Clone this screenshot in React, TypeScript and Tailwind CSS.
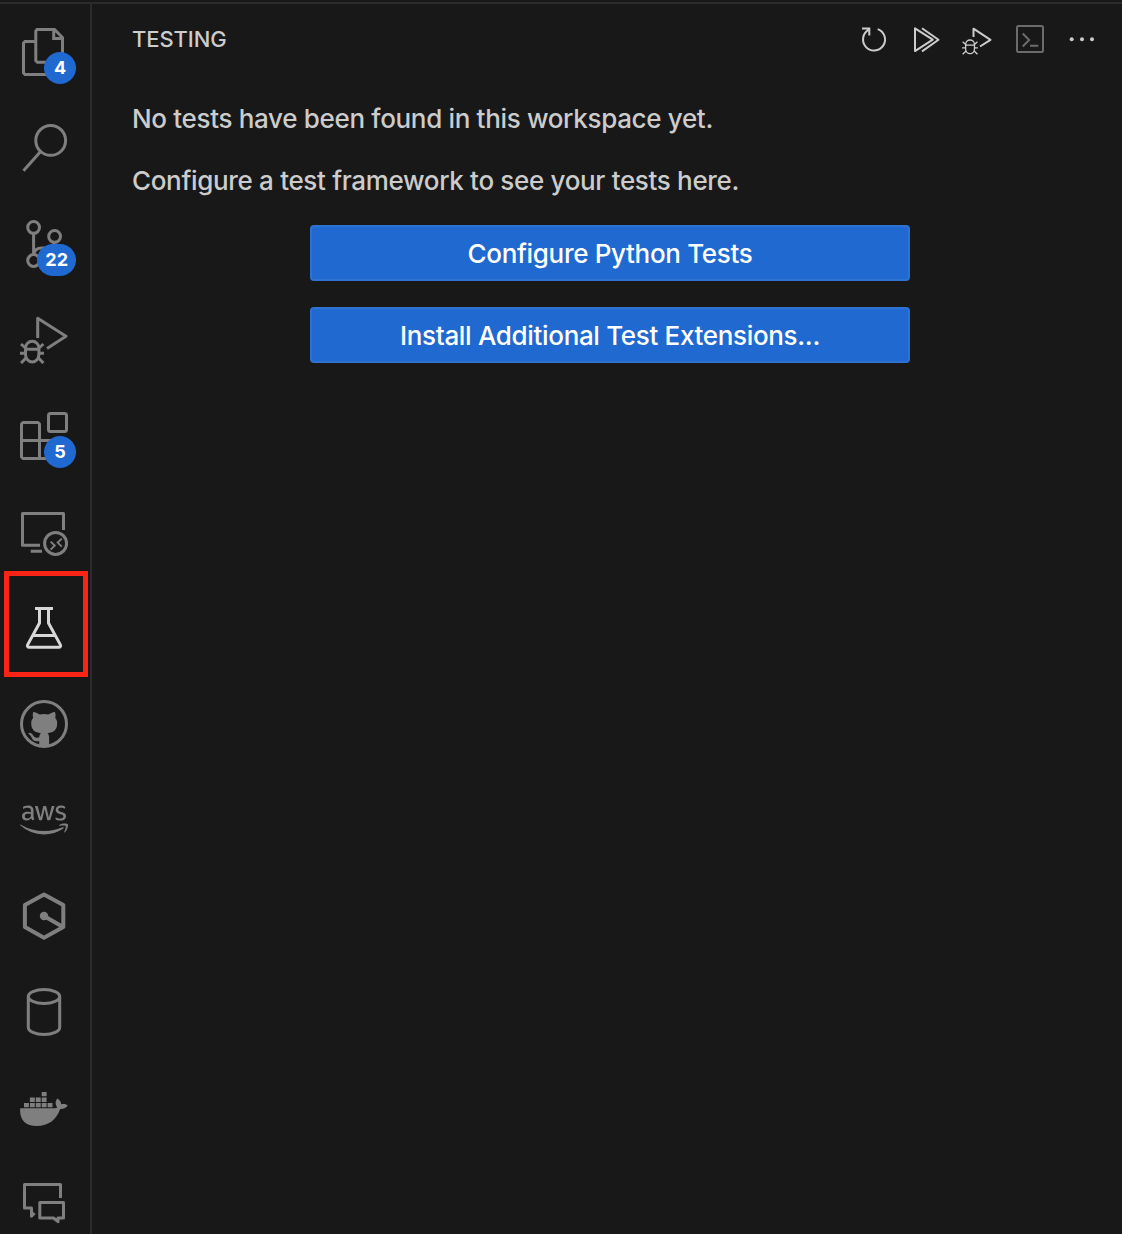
import type { ReactNode } from "react";
import { FaAws } from "react-icons/fa";

function Glyph({ children }: { children: ReactNode }) {
  return (
    <svg viewBox="0 0 48 48" className="h-12 w-12" fill="none" stroke="currentColor" strokeWidth={3}>
      {children}
    </svg>
  );
}

function Bug() {
  return (
    <>
      <path d="M5.5 34v4.5a6.7 7.5 0 0 0 13.4 0V32a6.7 6.7 0 0 0-13.4 0v2" />
      <path d="M5.5 33.2h13.4M0 37.3h5.5M19 37.3h5M1 28l5 4.5M23.4 28l-5 4.5M1 47l5.5-5.5M23.4 47 18 41.5" />
    </>
  );
}

const items: { name: string; badge?: string; active?: boolean; icon: ReactNode }[] = [
  {
    name: "Explorer",
    badge: "4",
    icon: (
      <Glyph>
        <path d="M17 1.5h17.5l8 8v23.2l-1.5 1.5H17.3l-1.5-1.5V3zM33.7 1.5v9.1h9" />
        <path d="M15 13.5H5L3.5 15v30L5 46.5h25l1.5-1.5V35" />
      </Glyph>
    ),
  },
  {
    name: "Search",
    icon: (
      <Glyph>
        <circle cx="30.7" cy="16.4" r="14.9" />
        <path d="M20.6 27.6 3.5 46.8" />
      </Glyph>
    ),
  },
  {
    name: "Source Control",
    badge: "22",
    icon: (
      <Glyph>
        <circle cx="13.6" cy="7.4" r="5.9" />
        <circle cx="34.600" cy="16.4" r="5.9" />
        <circle cx="13.6" cy="40.5" r="5.9" />
        <path d="M13.6 13.3v21.3c.8-4.4 3.6-6.6 8-6.6h5c4.500 0 7.800-2 7.800-5.700" />
      </Glyph>
    ),
  },
  {
    name: "Run and Debug",
    icon: (
      <Glyph>
        <path strokeLinejoin="round" d="M17.700 22V2.300L46 20.300 27 32.500" />
        <Bug />
      </Glyph>
    ),
  },
  {
    name: "Extensions",
    badge: "5",
    icon: (
      <Glyph>
        <rect x="28.500" y="1.500" width="18" height="18" rx="2" />
        <path strokeLinejoin="round" d="M3 10.500h15l1.500 1.500v34.500H3L1.500 45V12zM1.500 28.400h37v16l-2 2h-17" />
      </Glyph>
    ),
  },
  {
    name: "Remote Explorer",
    icon: (
      <Glyph>
        <path strokeLinejoin="round" d="M20 37.200H2.500V5.500h41V22M10.700 43.200H22" />
        <circle cx="35.600" cy="35.400" r="11" />
        <path strokeWidth="2" d="m30.600 33.600 4.100 4-4.100 4M41.800 30.600l-4.100 4 4.100 4" />
      </Glyph>
    ),
  },
  {
    name: "Testing",
    active: true,
    icon: (
      <Glyph>
        <path d="M15 4.500h18M19.500 4.500V19L7.700 40.600c-.8 1.500 0 2.700 1.600 2.700h29.400c1.600 0 2.400-1.200 1.600-2.700L28.500 19V4.500M13 31.500h22" />
      </Glyph>
    ),
  },
  {
    name: "GitHub",
    icon: (
      <Glyph>
        <circle cx="24" cy="24" r="22.500" />
        <path
          fill="currentColor"
          stroke="none"
          d="M13.200 12c2.600.2 4.800 1.400 6.500 2.600 2.800-.7 5.900-.7 8.700 0 1.700-1.200 3.900-2.400 6.500-2.600.9 2.200.8 4.200.3 5.700 1.300 1.500 2 3.300 2 5.600 0 7.100-4.100 9.300-9.700 9.900 1.200 1 1.600 2.500 1.600 4.500V47H19.200v-6c-4.700 1-6.300-.7-7.500-3.200-.8-1.700-1.600-3-3-3.800-.6-.5-.2-1.300.7-1.300 1.700.1 2.800 1.200 3.600 2.600 1.300 2.300 3.200 3.100 6.200 1.900.1-1.600.8-3.100 1.700-4-5.500-.6-9.700-2.800-9.700-9.900 0-2.300.7-4.100 2-5.600-.5-1.500-.7-3.500 0-5.700z"
        />
      </Glyph>
    ),
  },
  { name: "AWS", icon: <FaAws className="h-12 w-12" /> },
  {
    name: "Hex",
    icon: (
      <Glyph>
        <path strokeWidth="4" strokeLinejoin="round" d="M24 2.400 43.300 13v22L24 45.700 4.900 35V13zM24 24l19 11" />
        <circle cx="24" cy="24" r="4.200" fill="currentColor" stroke="none" />
      </Glyph>
    ),
  },
  {
    name: "Database",
    icon: (
      <Glyph>
        <ellipse cx="24" cy="8.500" rx="15.700" ry="7" />
        <path d="M8.300 8.500v31c0 3.900 7 7 15.700 7s15.700-3.100 15.700-7v-31" />
      </Glyph>
    ),
  },
  {
    name: "Docker",
    icon: (
      <Glyph>
        <path
          fill="currentColor"
          stroke="none"
          d="M4 19h4.900v4.300H4zM9.900 19h4.900v4.300H9.900zM15.800 19h4.900v4.300h-4.900zM21.700 19h4.900v4.300h-4.900zM27.600 19h4.900v4.300h-4.900zM9.900 13.500h4.900v4.400H9.900zM15.800 13.500h4.900v4.400h-4.900zM21.700 13.500h4.900v4.400h-4.900zM21.700 8h4.900v4.300h-4.900zM.2 24.200H34c1.500 0 2.500-.3 3.200-.8-2-2.800-2.200-6 .2-8.900 2.400 1.500 3.700 3.500 3.800 5.700 2.400-.5 4.700-.2 6.500 1.100-1.400 2.800-4.300 3.900-7.500 3.700C36.500 35.400 29 42 16.500 42 5.200 42-.8 35.600.2 24.200z"
        />
      </Glyph>
    ),
  },
  {
    name: "Comments",
    icon: (
      <Glyph>
        <path strokeLinejoin="round" d="M40.500 18V4.500h-36V28h7v8.300l3-3.300M19.800 22.500h23.700V38h-5.500v3.700L33.500 38H19.800z" />
      </Glyph>
    ),
  },
];

function ActivityBar() {
  return (
    <nav className="flex w-[92px] shrink-0 flex-col overflow-hidden border-r-2 border-[#2b2b2b]">
      {items.map(({ name, badge, active, icon }) => (
        <div
          key={name}
          title={name}
          className={`relative flex h-24 w-[88px] shrink-0 items-center justify-center ${active ? "text-[#d7d7d7]" : "text-[#7f7f7f]"}`}
        >
          {icon}
          {badge && (
            <span className="absolute right-3 bottom-4 flex h-8 min-w-8 items-center justify-center rounded-full bg-[#2069d0] px-2 text-lg font-bold text-white">
              {badge}
            </span>
          )}
          {active && <span className="absolute -top-[9px] left-1 h-[106px] w-[84px] border-[5px] border-[#f92316]" />}
        </div>
      ))}
    </nav>
  );
}

function Toolbar() {
  const tool = "h-8 w-8";
  const line = { viewBox: "0 0 32 32", fill: "none", stroke: "currentColor", strokeWidth: 2, className: tool };
  return (
    <div className="flex gap-5 text-[#cccccc]">
      <svg {...line}>
        <path d="M19.700 6.100A11 11 0 1 1 11 6.700M4 5.500h7.300v7" />
      </svg>
      <svg {...line}>
        <path strokeLinejoin="round" d="M5 5.300v22.800L22.800 16.700zM12 5.300l16.500 11.400L12 28.400" />
      </svg>
      <svg {...line}>
        <path strokeLinejoin="round" d="M11.500 14V5.700l17 11.100L18 23.500" />
        <g transform="translate(0 .3) scale(.66)">
          <Bug />
        </g>
      </svg>
      <svg {...line} className="h-8 w-8 text-[#6b6b6b]">
        <rect x="3" y="3" width="26" height="26" rx="1.500" />
        <path d="m8.700 10.500 6.500 6.500-6.500 6.500M16 22.700h8.300" />
      </svg>
      <svg viewBox="0 0 32 32" fill="currentColor" className={tool}>
        <circle cx="5.700" cy="16.300" r="2" />
        <circle cx="16" cy="16.300" r="2" />
        <circle cx="26" cy="16.300" r="2" />
      </svg>
    </div>
  );
}

function ActionButton({ children }: { children: ReactNode }) {
  return (
    <button className="h-14 w-[600px] rounded border-2 border-[#2e72d2] bg-[#2069d0] pt-0.5 text-[26px] font-[450] tracking-[-0.33px] text-white">
      {children}
    </button>
  );
}

export default function App() {
  return (
    <div className="flex h-[1234px] w-[1122px] flex-col overflow-hidden bg-[#181818] pt-0.5 font-['Inter',sans-serif]">
      <div className="flex min-h-0 flex-1 border-t-2 border-[#2b2b2b]">
        <ActivityBar />
        <main className="flex flex-1 flex-col text-[#cccccc]">
          <header className="flex h-[70px] items-center justify-between pr-6 pl-10">
            <h1 className="text-[22px] font-[450] tracking-[-0.1px]">TESTING</h1>
            <Toolbar />
          </header>
          <section className="flex flex-col pt-[27px] pr-[34px] pl-10 text-[26px] leading-9 font-[450] tracking-[-0.33px]">
            <p>No tests have been found in this workspace yet.</p>
            <p className="mt-[26px]">Configure a test framework to see your tests here.</p>
            <div className="mt-[26px] flex flex-col items-center gap-[26px]">
              <ActionButton>Configure Python Tests</ActionButton>
              <ActionButton>Install Additional Test Extensions...</ActionButton>
            </div>
          </section>
        </main>
      </div>
    </div>
  );
}
